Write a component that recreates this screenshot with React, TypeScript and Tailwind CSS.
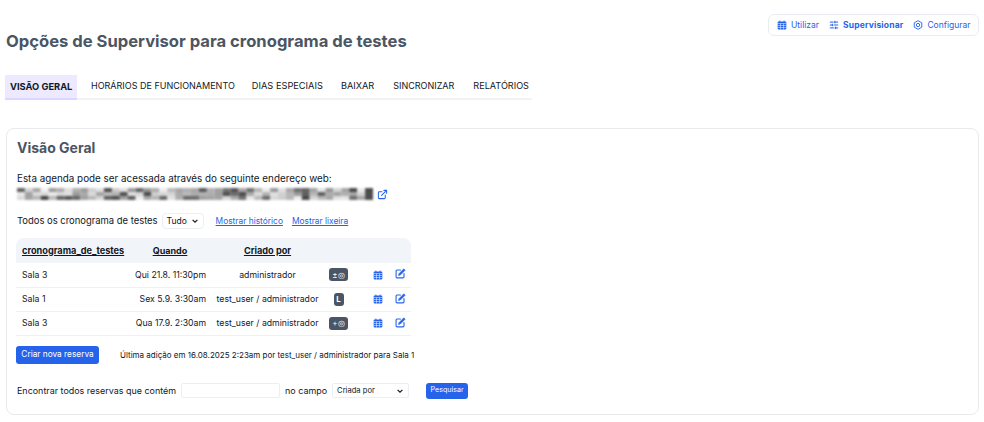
import React from "react";
import { SlidersHorizontal, ExternalLink } from "lucide-react";

const rnd = (i: number, k: number) => Math.abs(Math.sin(i * k) * 43758.5453) % 1;
const mosaic = Array.from({ length: 3 * 45 }, (_, i) => {
  const a = rnd(i + 1, 12.9898);
  const v = a > 0.78 ? 70 + (a - 0.78) * 200 : a > 0.4 ? 150 + (a - 0.4) * 100 : 205 + a * 100;
  return { x: (i % 45) * 8, y: Math.floor(i / 45) * 4, v: Math.round(v) };
});

function Cal() {
  return (
    <svg viewBox="0 0 12 12" className="w-[10px] h-[10px]" fill="#2563eb">
      <path d="M3 0.5h1v1.2h4V0.5h1v1.2h1.2A1 1 0 0 1 11.2 2.7v7.6a1 1 0 0 1-1 1H1.8a1 1 0 0 1-1-1V2.7a1 1 0 0 1 1-1H3z" />
      <path d="M0.8 4.2h10.4M4.2 4.2v7M7.8 4.2v7M0.8 6.6h10.4M0.8 9h10.4" stroke="#fff" strokeWidth="0.6" />
    </svg>
  );
}

function Gear() {
  return (
    <svg viewBox="0 0 12 12" className="w-[10px] h-[10px]" fill="none" stroke="#2563eb" strokeWidth="1.1">
      <path d="M6 0.8l4.5 2.6v5.2L6 11.2 1.5 8.6V3.4z" strokeLinejoin="round" />
      <circle cx="6" cy="6" r="2" />
    </svg>
  );
}

function Pen() {
  return (
    <svg viewBox="0 0 12 12" className="w-[11px] h-[11px] -mt-[2px]" fill="none" stroke="#2563eb" strokeWidth="1.2">
      <path d="M6 2.2H2.2a1 1 0 0 0-1 1v6.6a1 1 0 0 0 1 1h6.6a1 1 0 0 0 1-1V6" strokeLinecap="round" />
      <path d="M9.6 0.9l1.5 1.5-5.3 5.3-2 .5.5-2z" fill="#2563eb" stroke="#2563eb" strokeWidth="0.6" strokeLinejoin="round" />
    </svg>
  );
}

function Chevron() {
  return (
    <svg viewBox="0 0 10 10" className="w-[8px] h-[8px]">
      <path d="M2 3.5l3 3 3-3" fill="none" stroke="#111827" strokeWidth="1.5" />
    </svg>
  );
}

const rows = [
  { room: "Sala 3", when: "Qui 21.8. 11:30pm", by: "administrador", badge: "±◎" },
  { room: "Sala 1", when: "Sex 5.9. 3:30am", by: "test_user / administrador", badge: "L" },
  { room: "Sala 3", when: "Qua 17.9. 2:30am", by: "test_user / administrador", badge: "+◎" },
];

export default function App() {
  return (
    <div className="w-[984px] h-[422px] bg-white overflow-hidden font-['Inter',sans-serif] text-[#111827] px-[6px] pt-[14px]">
      <div className="flex justify-end mr-[-1px]">
        <div className="flex items-center h-[22px] w-[211px] border border-[#e9edf2] rounded-md pl-[8px] gap-[10px] text-[8.5px] leading-[10px] text-[#2563eb]">
          <span className="flex items-center gap-[4px]"><Cal />Utilizar</span>
          <span className="flex items-center gap-[4px] font-bold tracking-[0.02em]"><SlidersHorizontal size={10} strokeWidth={2.4} />Supervisionar</span>
          <span className="flex items-center gap-[4px]"><Gear />Configurar</span>
        </div>
      </div>
      <h1 className="text-[16.6px] leading-[24px] font-bold text-[#4b5563] mt-[-8px] pt-[1px] whitespace-nowrap">Opções de Supervisor para cronograma de testes</h1>
      <div className="flex w-[527px] -ml-[1px] h-[25px] border-b-2 border-[#f1f3f5] text-[9px] mt-[22px]">
        <div className="flex items-center px-[5px] w-[72px] -mb-[2px] h-[25px] bg-[#ede9fe] border-b-2 border-[#ddd6fe] font-bold text-[9.3px] whitespace-nowrap">VISÃO GERAL</div>
        <div className="flex items-center pb-[1px] ml-[14px] whitespace-nowrap">HORÁRIOS DE FUNCIONAMENTO</div>
        <div className="flex items-center pb-[1px] ml-[17px] whitespace-nowrap text-[9.25px]">DIAS ESPECIAIS</div>
        <div className="flex items-center pb-[1px] ml-[18px] whitespace-nowrap text-[9.2px]">BAIXAR</div>
        <div className="flex items-center pb-[1px] ml-[19px] whitespace-nowrap">SINCRONIZAR</div>
        <div className="flex items-center pb-[1px] ml-[19px] whitespace-nowrap text-[9.1px]">RELATÓRIOS</div>
      </div>
      <div className="mt-[28px] w-[973px] h-[287px] border border-[#e8eaee] rounded-lg px-[10px] pt-[10px]">
        <h2 className="text-[14px] leading-[18px] font-bold text-[#4b5563]">Visão Geral</h2>
        <p className="text-[9.85px] leading-[14px] mt-[14px]">Esta agenda pode ser acessada através do seguinte endereço web:</p>
        <div className="flex items-center gap-[4px] mt-[3px] h-[12px]">
          <svg viewBox="0 0 360 12" className="w-[356px] h-[12px]" style={{ filter: "blur(0.8px)" }}>
            {mosaic.map((m, i) => (
              <rect key={i} x={m.x} y={m.y} width={8} height={4} fill={`rgb(${m.v},${m.v},${m.v})`} />
            ))}
          </svg>
          <ExternalLink size={11} strokeWidth={2.2} color="#2563eb" />
        </div>
        <div className="flex items-center mt-[13px] h-[16px] text-[9.43px]">
          <span className="whitespace-nowrap">Todos os cronograma de testes</span>
          <span className="ml-[4px] flex items-center justify-between w-[42px] h-[16px] border border-[#eceef1] rounded text-[8.5px] px-[4px]">
            Tudo
            <Chevron />
          </span>
          <a className="ml-[12px] text-[8.4px] underline text-[#2563eb] whitespace-nowrap">Mostrar histórico</a>
          <a className="ml-[9px] text-[8.4px] underline text-[#2563eb] whitespace-nowrap">Mostrar lixeira</a>
        </div>
        <table className="mt-[9px] -ml-[1px] w-[395px] border-collapse text-[8.7px] table-fixed">
          <colgroup>
            <col className="w-[114px]" /><col className="w-[80px]" /><col className="w-[115px]" /><col className="w-[27px]" /><col className="w-[37px]" /><col className="w-[22px]" />
          </colgroup>
          <thead>
            <tr className="h-[25px] bg-[#f1f5f9]">
              <th className="pl-[6px] text-left font-bold underline text-[9.2px] rounded-tl-lg whitespace-nowrap">cronograma_de_testes</th>
              <th className="text-center font-bold underline text-[9px]">Quando</th>
              <th className="text-center font-bold underline text-[9.2px]">Criado por</th>
              <th /><th /><th className="rounded-tr-lg" />
            </tr>
          </thead>
          <tbody>
            {rows.map((r, i) => (
              <tr key={i} className="h-[24px] border-b border-[#eef0f3]">
                <td className="pl-[6px] pt-[1px]">{r.room}</td>
                <td className="text-right pr-[4px] pt-[1px] whitespace-nowrap">{r.when}</td>
                <td className="text-center pt-[1px] whitespace-nowrap">{r.by}</td>
                <td>
                  <div className="flex justify-center">
                    <span className={`inline-flex items-center justify-center h-[13px] rounded-[3px] bg-[#4b5563] text-white text-[8px] ${r.badge === "L" ? "w-[10px] font-bold" : "w-[19px] shrink-0"}`}>{r.badge}</span>
                  </div>
                </td>
                <td><div className="flex justify-end pr-[6px]"><Cal /></div></td>
                <td><div className="flex justify-center"><Pen /></div></td>
              </tr>
            ))}
          </tbody>
        </table>
        <div className="flex items-center mt-[10px] -ml-[1px] h-[18px]">
          <button className="w-[83px] h-[18px] bg-[#2563eb] text-white text-[8.3px] rounded-[3px]">Criar nova reserva</button>
          <span className="ml-[21px] text-[8px] whitespace-nowrap">Última adição em 16.08.2025 2:23am por test_user / administrador para Sala 1</span>
        </div>
        <div className="flex items-center mt-[19px] h-[16px] text-[8.95px]">
          <span className="whitespace-nowrap">Encontrar todos reservas que contém</span>
          <span className="ml-[5px] w-[99px] h-[15px] border border-[#eceef1] rounded-[2px]" />
          <span className="ml-[5px] whitespace-nowrap">no campo</span>
          <span className="ml-[5px] flex items-center justify-between w-[77px] h-[15px] border border-[#eceef1] rounded-[2px] text-[7.6px] px-[4px]">
            Criada por
            <Chevron />
          </span>
          <button className="ml-[17px] w-[42px] h-[16px] bg-[#2563eb] text-white text-[7.1px] rounded-[3px]">Pesquisar</button>
        </div>
      </div>
    </div>
  );
}
